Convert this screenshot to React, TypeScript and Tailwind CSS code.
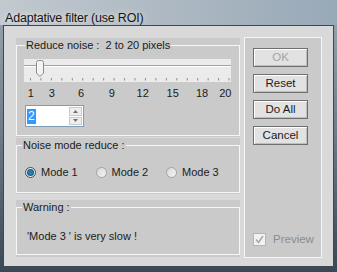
import React from "react";

const font = { fontFamily: '"Liberation Sans", Arial, sans-serif' };

const ticks = Array.from({ length: 20 }, (_, i) => 6.5 + i * 10.45);

const scaleLabels = [
  { text: "1", x: 6.7 },
  { text: "3", x: 27.7 },
  { text: "6", x: 57 },
  { text: "9", x: 87.7 },
  { text: "12", x: 118.7 },
  { text: "15", x: 148.7 },
  { text: "18", x: 178 },
  { text: "20", x: 201.3 },
];

const modes = ["Mode 1", "Mode 2", "Mode 3"];
const buttons = [
  { label: "OK", disabled: true },
  { label: "Reset" },
  { label: "Do All" },
  { label: "Cancel" },
];

function Slider() {
  return (
    <div className="ml-[7px] mt-[8px] w-[207px] h-[23px] bg-[#ebebeb]">
      <svg width="207" height="23" viewBox="0 0 207 23">
        <line x1="0" y1="6.5" x2="207" y2="6.5" stroke="#a3a3a3" />
        <line x1="0" y1="7.5" x2="207" y2="7.5" stroke="#ffffff" />
        {ticks.map((x, i) => (
          <line key={i} x1={x} y1="19" x2={x} y2="21.5" stroke="#8e8e8e" />
        ))}
        <path
          d="M12.5 3.5 Q12.5 1.5 14.5 1.5 H17.5 Q19.5 1.5 19.5 3.5 V14 L16 17.5 L12.5 14 Z"
          fill="#f3f3f3"
          stroke="#8a8a8a"
        />
        <line x1="13.5" y1="3" x2="13.5" y2="13" stroke="#ffffff" />
      </svg>
    </div>
  );
}

function Radio({ checked }: { checked?: boolean }) {
  if (checked) {
    return (
      <span className="w-[11px] h-[11px] rounded-full border border-[#3b4a57] bg-[#e6eef3] flex items-center justify-center">
        <span className="w-[5px] h-[5px] rounded-full bg-[#2b7bab] shadow-[0_0_0_1px_#1d5a80]" />
      </span>
    );
  }
  return (
    <span className="w-[11px] h-[11px] rounded-full border border-[#a2a2a2] bg-gradient-to-br from-[#d8d8d8] to-[#f6f6f6]" />
  );
}

export default function App() {
  return (
    <div
      className="w-[337px] h-[272px] flex flex-col bg-gradient-to-b from-[#9aa8b4] via-[#6d7b88] to-[#3a4856] text-[#1b1b1b]"
      style={font}
    >
      {/* title bar */}
      <div className="h-[25px] pl-[5px] pt-[5px] bg-gradient-to-r from-[#c2c9cf] via-[#adb8c2] to-[#98a9b8]">
        <span className="text-[12.5px] leading-[15px] tracking-[-0.2px] text-[#161616] [text-shadow:0_0_6px_rgba(255,255,255,0.9)]">
          Adaptative filter (use ROI)
        </span>
      </div>

      {/* client area */}
      <div className="mx-[3px] w-[331px] h-[242px] border border-[#3e4852] bg-[#d9d9d9] flex pt-[11px] pl-[12px] text-[11px]">
        {/* left column */}
        <div className="w-[224px] flex flex-col pt-[1px]">
          <div className="bg-[#cacaca] pt-[1px] pb-[1px]">
            <fieldset className="border border-[#f6f6f6] pb-[8px] min-w-0">
              <legend className="ml-[8px] px-[1px] leading-[12px] whitespace-pre">
                Reduce noise :  2 to 20 pixels
              </legend>
              <Slider />
              <div className="relative ml-[7px] mt-[5px] h-[13px] leading-[13px]">
                {scaleLabels.map((l) => (
                  <span
                    key={l.text}
                    className="absolute top-0 -translate-x-1/2"
                    style={{ left: l.x }}
                  >
                    {l.text}
                  </span>
                ))}
              </div>
              <div className="ml-[8px] mt-[5px] w-[59px] h-[22px] flex border border-[#7f9db9] bg-white">
                <div className="flex-1 flex items-center pl-[1px]">
                  <span className="bg-[#3399ff] text-white px-[1px] text-[12px] leading-[15px]">2</span>
                </div>
                <div className="w-[15px] flex flex-col gap-[1px] p-[1px]">
                  <div className="flex-1 bg-[#eeeeee] border border-[#c9c9c9] flex items-center justify-center">
                    <svg width="5" height="3" viewBox="0 0 5 3">
                      <path d="M0 3 L2.5 0 L5 3 Z" fill="#6f6f6f" />
                    </svg>
                  </div>
                  <div className="flex-1 bg-[#eeeeee] border border-[#c9c9c9] flex items-center justify-center">
                    <svg width="5" height="3" viewBox="0 0 5 3">
                      <path d="M0 0 L5 0 L2.5 3 Z" fill="#6f6f6f" />
                    </svg>
                  </div>
                </div>
              </div>
            </fieldset>
          </div>

          <div className="bg-[#cacaca] mt-[1px] pt-[1px] pb-[1px]">
            <fieldset className="border border-[#f6f6f6] pb-[13px] min-w-0">
              <legend className="ml-[5px] px-[1px] leading-[12px]">Noise mode reduce :</legend>
              <div className="mt-[15px] ml-[8px] flex h-[13px] items-center">
                {modes.map((m, i) => (
                  <div key={m} className="w-[70.5px] flex items-center gap-[5px]">
                    <Radio checked={i === 0} />
                    <span className="leading-[13px]">{m}</span>
                  </div>
                ))}
              </div>
            </fieldset>
          </div>

          <div className="bg-[#cacaca] mt-[6px] pt-[1px] pb-[2px]">
            <fieldset className="border border-[#f6f6f6] pb-[11px] min-w-0">
              <legend className="ml-[5px] px-[1px] leading-[12px]">Warning :</legend>
              <div className="mt-[17px] ml-[10px] leading-[13px]">'Mode 3 ' is very slow !</div>
            </fieldset>
          </div>
        </div>

        {/* right panel */}
        <div className="ml-[4px] w-[78px] h-[221px] border border-[#f6f6f6] bg-[#cacaca] flex flex-col pt-[10px] pl-[8px] pb-[11px]">
          <div className="flex flex-col gap-[7px]">
            {buttons.map((b) => (
              <button
                key={b.label}
                className={`w-[55px] h-[19px] border border-[#6f6f6f] bg-[#e2e2e2] shadow-[inset_1px_1px_0_#ffffff,inset_-1px_-1px_0_#bdbdbd] text-[11.5px] leading-[15px] ${
                  b.disabled ? "text-[#a4a4a4]" : "text-[#1b1b1b]"
                }`}
              >
                {b.label}
              </button>
            ))}
          </div>
          <div className="mt-auto flex items-center gap-[7px]">
            <span className="w-[13px] h-[13px] border border-[#b4b4b4] bg-[#f2f2f2] flex items-center justify-center">
              <svg width="9" height="9" viewBox="0 0 9 9">
                <path d="M1 4.5 L3.5 7.5 L8 1" fill="none" stroke="#a9a9a9" strokeWidth="1.6" />
              </svg>
            </span>
            <span className="text-[11.5px] leading-[13px] text-[#8c8c8c]">Preview</span>
          </div>
        </div>
      </div>
    </div>
  );
}
